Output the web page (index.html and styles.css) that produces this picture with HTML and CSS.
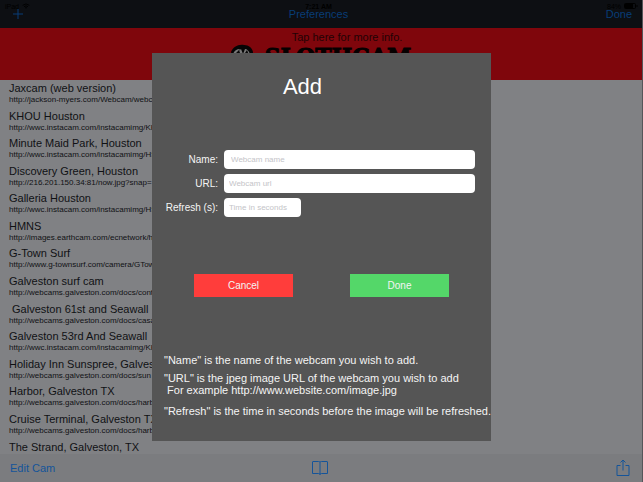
FILE: index.html
```html
<!DOCTYPE html>
<html lang="en">
<head>
  <meta charset="UTF-8">
  <meta name="viewport" content="width=device-width, initial-scale=1">
  <title>Preferences</title>
  <link rel="stylesheet" href="styles.css">
</head>
<body>
  <div class="app">
    <header class="navbar">
      <div class="status-left">
        <span>iPad</span>
        <svg class="wifi" viewBox="0 0 12 9">
          <path d="M1 3.5Q6-.8 11 3.5M3 5.5Q6 3 9 5.5" fill="none" stroke="currentColor" stroke-width="1.4"/>
          <circle cx="6" cy="7.2" r="1.2" fill="currentColor"/>
        </svg>
      </div>
      <div class="status-time">7:21 AM</div>
      <div class="status-right">
        <span>84%</span>
        <svg class="battery" viewBox="0 0 14 6">
          <rect x=".5" y=".5" width="11" height="5" rx="1" fill="none" stroke="currentColor"/>
          <path d="M1 1h8v4H1zM12.5 2h1v2h-1z" fill="currentColor"/>
        </svg>
      </div>
      <button class="nav-btn nav-add" aria-label="Add webcam">
        <svg class="plus" viewBox="0 0 10 10"><path d="M5 0v10M0 5h10" stroke="currentColor"/></svg>
      </button>
      <button class="nav-btn nav-title">Preferences</button>
      <button class="nav-btn nav-done">Done</button>
    </header>

    <div class="banner">
      <a href="#" class="banner-link">Tap here for more info.</a>
      <div class="logo">
        <svg class="sloth" viewBox="0 0 24 24">
          <path d="M0 8C2 3 7 0 13 1c5 0 8 3 9 7l-1 12-9 4-9-4z" fill="#050505"/>
          <path d="M2 10q2-5 7-5L7 8l-3 3zM10 5l2 5 2-5q3 0 5 5l-1 7-6 5-8-5-1-6z" fill="#777"/>
          <path d="M5 9l3-3 2 6zM14 9l2-3 2 5zM9 14h6l-3 3z" fill="#080808"/>
        </svg>
        <span>SLOTHCAM</span>
      </div>
    </div>

    <main class="content">
      <ul class="cam-list">
        <li><h2>Jaxcam (web version)</h2><p>http://jackson-myers.com/Webcam/webcam.jpg</p></li>
        <li><h2>KHOU Houston</h2><p>http://wwc.instacam.com/instacamimg/KHOU</p></li>
        <li><h2>Minute Maid Park, Houston</h2><p>http://wwc.instacam.com/instacamimg/HSTMM</p></li>
        <li><h2>Discovery Green, Houston</h2><p>http://216.201.150.34:81/now.jpg?snap=</p></li>
        <li><h2>Galleria Houston</h2><p>http://wwc.instacam.com/instacamimg/HSTGL</p></li>
        <li><h2>HMNS</h2><p>http://images.earthcam.com/ecnetwork/hmns</p></li>
        <li><h2>G-Town Surf</h2><p>http://www.g-townsurf.com/camera/GTown.jpg</p></li>
        <li><h2>Galveston surf cam</h2><p>http://webcams.galveston.com/docs/cont</p></li>
        <li><h2>&nbsp;Galveston 61st and Seawall</h2><p>http://webcams.galveston.com/docs/casa</p></li>
        <li><h2>Galveston 53rd And Seawall</h2><p>http://wwc.instacam.com/instacamimg/KHOU</p></li>
        <li><h2>Holiday Inn Sunspree, Galveston</h2><p>http://webcams.galveston.com/docs/sun</p></li>
        <li><h2>Harbor, Galveston TX</h2><p>http://webcams.galveston.com/docs/harbor</p></li>
        <li><h2>Cruise Terminal, Galveston TX</h2><p>http://webcams.galveston.com/docs/harbor</p></li>
        <li><h2>The Strand, Galveston, TX</h2></li>
      </ul>
    </main>

    <footer class="toolbar">
      <button class="tool-btn">Edit Cam</button>
      <button class="tool-btn" aria-label="Bookmarks">
        <svg class="book" viewBox="0 0 18 16">
          <path d="M9 2Q8.500 1.500 7.500 1.500H2Q1.500 1.500 1.500 2V13.500H7.500Q9 13.500 9 14.500Q9 13.500 10.500 13.500H16.500V2Q16.500 1.500 16 1.500H10.500Q9.500 1.500 9 2V14.500" fill="none" stroke="currentColor"/>
        </svg>
      </button>
      <button class="tool-btn" aria-label="Share">
        <svg class="share" viewBox="0 0 14 18">
          <path d="M4.500 6.500H1v10h12v-10H9.500M7 11.500V1M4.500 3.500L7 1l2.500 2.500" fill="none" stroke="currentColor"/>
        </svg>
      </button>
    </footer>
  </div>

  <div class="overlay">
    <form class="dialog" role="dialog" aria-labelledby="dialogTitle">
      <h1 id="dialogTitle">Add</h1>

      <div class="fields">
        <label for="camName">Name:</label>
        <input type="text" id="camName" class="inset" placeholder="Webcam name">
        <label for="camUrl">URL:</label>
        <input type="text" id="camUrl" placeholder="Webcam url">
        <label for="camRefresh">Refresh (s):</label>
        <input type="text" id="camRefresh" class="short" placeholder="Time in seconds">
      </div>

      <div class="actions">
        <button type="button" class="btn cancel">Cancel</button>
        <button type="button" class="btn done">Done</button>
      </div>

      <div class="help">
        <p>"Name" is the name of the webcam you wish to add.</p>
        <p>"URL" is the jpeg image URL of the webcam you wish to add<br>&nbsp;For example http://www.website.com/image.jpg</p>
        <p>"Refresh" is the time in seconds before the image will be refreshed.</p>
      </div>
    </form>
  </div>
</body>
</html>
```

FILE: styles.css
```css
* {
  margin: 0;
  padding: 0;
  box-sizing: border-box;
}

body {
  font-family: "Liberation Sans", Arial, sans-serif;
  font-size: 11px;
  background: #808184;
  color: #101114;
  overflow: hidden;
}

button {
  font: inherit;
  border: none;
  background: none;
  cursor: pointer;
}

svg {
  display: block;
}

.app {
  height: 100vh;
  display: flex;
  flex-direction: column;
  border-right: 1px solid #55565a;
}

/* status row and nav row share the same bar */
.navbar {
  height: 28px;
  flex-shrink: 0;
  display: grid;
  grid-template-columns: 1fr auto 1fr;
  grid-template-rows: 6px 10px;
  padding: 3px 10px 0 5px;
  background: #0d0f13;
  color: #000;
}

.status-left,
.status-right {
  display: flex;
  align-items: center;
  gap: 3px;
  font-size: 7px;
}

.status-right {
  justify-content: flex-end;
  margin-right: -6px;
}

.status-time {
  font-size: 7px;
  font-weight: bold;
  text-align: center;
}

.wifi {
  width: 8px;
  height: 6px;
}

.battery {
  width: 14px;
  height: 6px;
}

.nav-btn {
  color: #083d77;
  line-height: 10px;
}

.nav-add {
  justify-self: start;
  padding-left: 8px;
}

.nav-done {
  justify-self: end;
}

.plus {
  width: 10px;
  height: 10px;
}

.banner {
  height: 52px;
  flex-shrink: 0;
  display: flex;
  flex-direction: column;
  align-items: center;
  padding-top: 3px;
  background: #7f060c;
  overflow: hidden;
}

.banner-link {
  color: #1f0305;
  line-height: 13px;
  text-decoration: none;
  padding-left: 52px;
}

.logo {
  display: flex;
  gap: 10px;
  color: #050000;
  font-family: "DejaVu Serif", serif;
  font-size: 22px;
  font-weight: bold;
  line-height: 24px;
  -webkit-text-stroke: 1px #050000;
}

.sloth {
  width: 24px;
  height: 24px;
}

.content {
  flex: 1;
  min-height: 0;
  overflow: hidden;
}

.cam-list {
  height: 387px;
  display: flex;
  flex-direction: column;
  list-style: none;
  padding: 1px 9px 0;
}

.cam-list li {
  flex: 1;
  white-space: nowrap;
}

.cam-list h2 {
  font-size: 11px;
  font-weight: normal;
  line-height: 14px;
}

.cam-list p {
  font-size: 8px;
  line-height: 9px;
}

.toolbar {
  height: 28px;
  flex-shrink: 0;
  display: grid;
  grid-template-columns: 1fr auto 1fr;
  align-items: center;
  padding: 0 12px 0 10px;
  background: #7b7c7f;
}

.tool-btn {
  color: #14549a;
}

.tool-btn:first-child {
  justify-self: start;
}

.tool-btn:last-child {
  justify-self: end;
}

.book {
  width: 18px;
  height: 16px;
}

.share {
  width: 14px;
  height: 18px;
}

.overlay {
  position: fixed;
  inset: 0;
  display: flex;
  align-items: flex-start;
  justify-content: center;
  padding-top: 53px;
}

.dialog {
  width: 90%;
  max-width: 339px;
  padding: 20px 12px 24px;
  background: #555;
  color: #f4f4f4;
}

.dialog h1 {
  font-size: 22px;
  font-weight: normal;
  line-height: 28px;
  text-align: center;
  color: #fff;
  padding-right: 38px;
}

.fields {
  display: grid;
  grid-template-columns: 54px 1fr;
  gap: 5px 6px;
  align-items: center;
  margin-top: 49px;
  padding-right: 4px;
}

.fields label {
  font-size: 10px;
  text-align: right;
  white-space: nowrap;
}

.fields input {
  width: 100%;
  height: 19px;
  border: none;
  border-radius: 4px;
  padding: 0 5px;
  background: #fff;
  font-family: inherit;
  font-size: 8px;
}

.fields .inset {
  padding-left: 7px;
}

.fields .short {
  width: 77px;
}

.fields input::placeholder {
  color: #c4c4c8;
}

.actions {
  display: flex;
  justify-content: space-between;
  margin-top: 57px;
  padding: 0 30px;
}

.btn {
  width: 99px;
  height: 23px;
  color: #f4f4f4;
  font-size: 10px;
}

.btn.cancel {
  background: #ff3d3b;
}

.btn.done {
  background: #54d769;
}

.help {
  display: flex;
  flex-direction: column;
  gap: 6px;
  margin-top: 57px;
  line-height: 12px;
  white-space: nowrap;
}

.help p:last-child {
  margin-top: 3px;
}
```
